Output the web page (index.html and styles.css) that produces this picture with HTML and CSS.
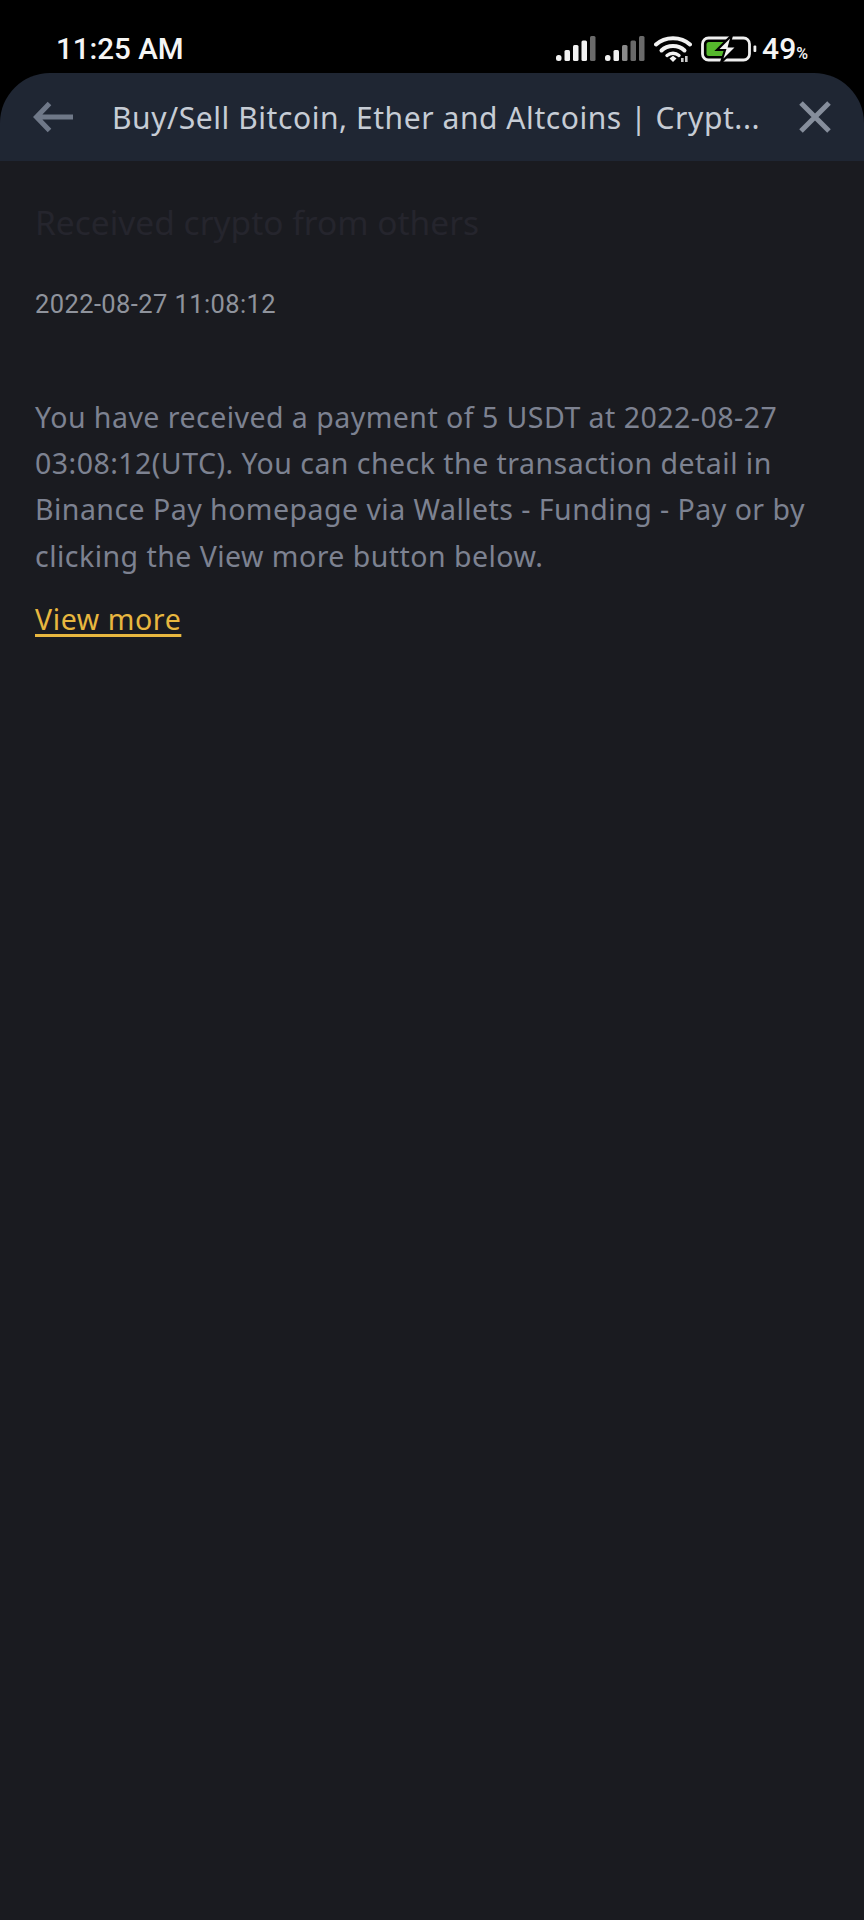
FILE: index.html
```html
<!DOCTYPE html>
<html lang="en">
<head>
<meta charset="utf-8">
<title>Received crypto from others</title>
<link rel="stylesheet" href="styles.css">
</head>
<body>
<div class="phone">
  <div class="status-bar">
    <span class="clock">11:25 AM</span>
    <div class="status-icons">
      <svg class="signal" viewBox="0 0 40 26" width="40" height="26">
        <rect x="0" y="19" width="5.5" height="6" rx="2.5" fill="#f2f2f2"/>
        <rect x="8.5" y="14" width="5.5" height="11" rx="1.5" fill="#f2f2f2"/>
        <rect x="17" y="9" width="5.5" height="16" rx="1.5" fill="#f2f2f2"/>
        <rect x="25.5" y="4.5" width="5.5" height="20.5" rx="1.5" fill="#f2f2f2"/>
        <rect x="34" y="0" width="5.5" height="25" rx="1.5" fill="#6a6a6a"/>
      </svg>
      <svg class="signal" viewBox="0 0 40 26" width="40" height="26">
        <rect x="0" y="19" width="5.5" height="6" rx="2.5" fill="#f2f2f2"/>
        <rect x="8.5" y="14" width="5.5" height="11" rx="1.5" fill="#f2f2f2"/>
        <rect x="17" y="9" width="5.5" height="16" rx="1.5" fill="#8a8a8a"/>
        <rect x="25.5" y="4.5" width="5.5" height="20.5" rx="1.5" fill="#6a6a6a"/>
        <rect x="34" y="0" width="5.5" height="25" rx="1.5" fill="#6a6a6a"/>
      </svg>
      <svg class="wifi" viewBox="0 0 38 28" width="38" height="28">
        <path d="M2 9.5C11 1 27 1 36 9.5" fill="none" stroke="#f2f2f2" stroke-width="4" stroke-linecap="round"/>
        <path d="M7.5 15.5C13.5 9.5 24.5 9.5 30.5 15.5" fill="none" stroke="#f2f2f2" stroke-width="4" stroke-linecap="round"/>
        <path d="M13 20.5C16.5 17.5 21.5 17.5 25 20.5" fill="none" stroke="#f2f2f2" stroke-width="3.4" stroke-linecap="round"/>
        <path d="M15.5 23.5L19 20.8L22.5 23.5L19 27Z" fill="#f2f2f2"/>
        <rect x="27" y="23" width="2.6" height="4" fill="#c8c8c8"/>
        <rect x="31" y="21" width="2.6" height="6" fill="#c8c8c8"/>
      </svg>
      <svg class="battery" viewBox="0 0 56 28" width="56" height="28">
        <rect x="1.5" y="3" width="47" height="22" rx="6" fill="none" stroke="#efefef" stroke-width="2.8"/>
        <rect x="5.5" y="7" width="20" height="14" rx="2.5" fill="#55b82c"/>
        <rect x="52.5" y="10.5" width="2.8" height="6.5" rx="1" fill="#efefef"/>
        <path d="M31 0L16 15H24L20 27.5L36 11.5H28Z" fill="#f4f4f4" stroke="#000" stroke-width="2.2"/>
      </svg>
      <span class="level">49<small class="percent">%</small></span>
    </div>
  </div>

  <div class="browser-bar">
    <svg class="back" viewBox="0 0 40 32" width="40" height="32">
      <path d="M16.5 2.5L3.5 16L16.5 29.5M4 16H40" fill="none" stroke="#6f7888" stroke-width="5"/>
    </svg>
    <span class="page-title">Buy/Sell Bitcoin, Ether and Altcoins | Crypt...</span>
    <svg class="close" viewBox="0 0 34 34" width="34" height="34">
      <path d="M3 3L31 31M31 3L3 31" fill="none" stroke="#868e9c" stroke-width="5"/>
    </svg>
  </div>

  <main class="article">
    <h1 class="article-title">Received crypto from others</h1>
    <p class="timestamp">2022-08-27 11:08:12</p>
    <p class="message">You have received a payment of 5 USDT at 2022-08-27 03:08:12(UTC). You can check the transaction detail in Binance Pay homepage via Wallets - Funding - Pay or by clicking the View more button below.</p>
    <a class="more" href="#">View more</a>
  </main>
</div>
</body>
</html>
```
FILE: styles.css
```css
* { box-sizing: border-box; }

html, body {
  margin: 0;
  padding: 0;
  background: #000;
}

.phone {
  width: 864px;
  height: 1920px;
  display: flex;
  flex-direction: column;
  overflow: hidden;
  background: #000;
  font-family: "Noto Sans", "Liberation Sans", sans-serif;
}

.status-bar {
  height: 73px;
  flex: none;
  display: flex;
  justify-content: space-between;
  align-items: center;
  padding: 24px 56px 0 56px;
  color: #f5f5f5;
  font-family: Roboto, sans-serif;
}

.clock {
  font-size: 29.5px;
  font-weight: 500;
}

.status-icons {
  display: flex;
  align-items: center;
  gap: 9px;
}

.level {
  font-size: 30px;
  font-weight: 500;
  margin-left: -4px;
}

.percent {
  font-size: 16px;
}

.browser-bar {
  height: 88px;
  flex: none;
  display: flex;
  align-items: center;
  padding: 0 32px 0 33px;
  background: #1f2633;
  border-radius: 50px 50px 0 0;
}

.back { flex: none; }

.page-title {
  flex: 1;
  margin-left: 39px;
  font-size: 30px;
  letter-spacing: 0.56px;
  color: #c6ccd5;
  white-space: nowrap;
}

.close { flex: none; }

.article {
  flex: 1;
  padding: 0 35px;
  background: #1a1b20;
}

.article-title {
  margin: 0;
  padding-top: 39px;
  font-size: 33.5px;
  line-height: 44px;
  font-weight: 400;
  color: #25252d;
}

.timestamp {
  margin: 43px 0 0;
  font-family: Roboto, sans-serif;
  font-size: 25.5px;
  line-height: 34px;
  letter-spacing: 0.4px;
  color: #8f939c;
}

.message {
  margin: 73px 0 0;
  font-size: 28.5px;
  letter-spacing: 0.47px;
  line-height: 46.2px;
  color: #7d8291;
}

.more {
  display: inline-block;
  margin-top: 17px;
  font-size: 28.5px;
  letter-spacing: 0.6px;
  line-height: 46px;
  color: #e8b73f;
  text-decoration: underline;
  text-decoration-thickness: 2.5px;
  text-underline-offset: 4px;
}
```
